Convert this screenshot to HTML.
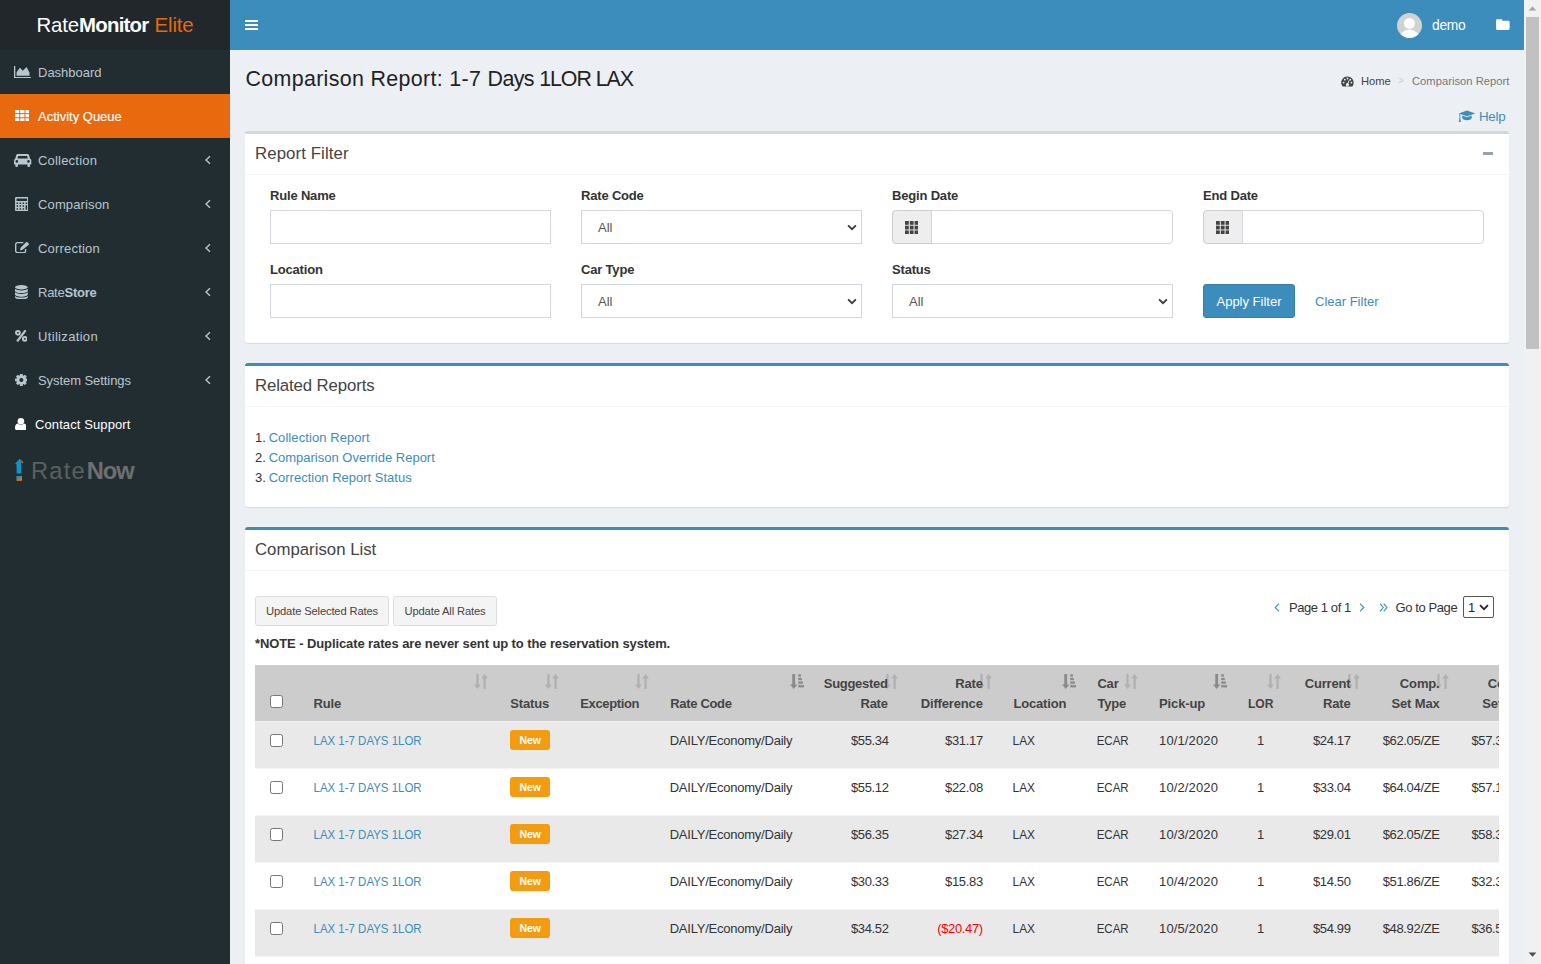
<!DOCTYPE html>
<html lang="en">
<head>
<meta charset="utf-8">
<title>Comparison Report: 1-7 Days 1LOR LAX</title>
<style>
*{box-sizing:border-box}
html,body{margin:0;padding:0}
body{width:1541px;height:964px;overflow:hidden;position:relative;background:#ecf0f5;
 font-family:"Liberation Sans",sans-serif;font-size:13px;line-height:20px;color:#333}
a{color:#3c8dbc;text-decoration:none}
.abs{position:absolute}
svg{display:block}

/* ---------- sidebar ---------- */
#sidebar{position:absolute;left:0;top:0;width:230px;height:964px;background:#222d32}
#logo{position:absolute;left:0;top:0;width:230px;height:50px;background:#22272b;color:#fff;
 font-size:20.4px;line-height:50px;white-space:nowrap}
#logo span.t{position:absolute;left:36.500px;top:0;letter-spacing:-0.15px}
#logo b{font-weight:700;letter-spacing:-0.75px}
#logo i{font-style:normal;color:#e8690e;margin-left:0.6px}
.menu{position:absolute;left:0;top:50px;width:230px;margin:0;padding:0;list-style:none}
.menu li{position:relative;height:44px;color:#b8c7ce;white-space:nowrap}
.menu li .ic{position:absolute}
.menu li .tx{position:absolute;left:38px;top:13px;line-height:20px;font-size:13px}
.menu li .ch{position:absolute;left:204px;top:16px}
.menu li.active{background:#e8690e;color:#fff;-webkit-text-stroke:0.15px #fff}
.menu li.white{color:#fff}

/* ---------- navbar ---------- */
#navbar{position:absolute;left:230px;top:0;width:1294px;height:50px;background:#3c8dbc;color:#fff}

/* ---------- scrollbar ---------- */
#sb{position:absolute;left:1524px;top:0;width:17px;height:964px;background:#f1f1f1}
#sb .thumb{position:absolute;left:2px;top:17px;width:13px;height:332px;background:#c1c1c1}

/* ---------- content ---------- */
h1{position:absolute;left:245.500px;top:63px;margin:0;font-weight:400;font-size:21.4px;line-height:32px;color:#222;white-space:nowrap;letter-spacing:-0.05px}
.box{position:absolute;left:245px;width:1264px;background:#fff;border-top:3px solid #d2d6de;border-radius:3px;
 box-shadow:0 1px 1px rgba(0,0,0,.1)}
.box.primary{border-top-color:#3c8dbc}
.box .hd{height:41px;border-bottom:1px solid #f4f4f4;position:relative}
.box .hd h3{position:absolute;left:10px;top:9px;letter-spacing:0.1px;margin:0;font-weight:400;font-size:16.8px;line-height:22px;color:#444;white-space:nowrap}
label.fl{position:absolute;font-weight:700;font-size:13px;line-height:20px;color:#333;white-space:nowrap;letter-spacing:-0.18px}
.inp{position:absolute;height:34px;border:1px solid #d2d6de;background:#fff}
.sel{position:absolute;height:34px;border:1px solid #d2d6de;background:#fff;color:#555;font-size:13px;line-height:32px;padding-left:16px;padding-top:1px}
.sel svg{position:absolute;right:4px;top:13px}
.addon{position:absolute;width:40px;height:34px;border:1px solid #ccc;background:#eee;border-radius:4px 0 0 4px}

.btnp{position:absolute;width:92px;height:34px;background:#3c8dbc;border:1px solid #367fa9;border-radius:3px;color:#fff;
 text-align:center;line-height:34px;font-size:13px;white-space:nowrap}
ol.rel{position:absolute;left:10px;top:62px;margin:0;padding:0;list-style:none;line-height:20px;white-space:nowrap}
ol.rel li{height:20px}
ol.rel span{display:inline-block;width:10px}

#ratenow .rn{position:absolute;left:31px;top:453px;font-size:23.700px;line-height:36px;color:#5c5f60;white-space:nowrap;letter-spacing:1.200px}
#ratenow .rn b{color:#6e6f6f;letter-spacing:-1.100px;margin-left:1px}

.btnd{position:absolute;height:30px;background:#f4f4f4;border:1px solid #ddd;border-radius:3px;color:#444;text-align:center;
 line-height:28px;font-size:11.200px;white-space:nowrap;letter-spacing:-0.150px}
.note{position:absolute;left:10px;top:104px;font-weight:700;font-size:13px;line-height:20px;color:#333;white-space:nowrap;letter-spacing:-0.100px}
#tw{position:absolute;left:10px;top:135px;width:1244px;height:340px;overflow:hidden}
#tbl{border-collapse:collapse;table-layout:fixed;width:1290px;font-size:13px;line-height:20px;color:#333}
#tbl th,#tbl td{padding:0 8px;white-space:nowrap;text-align:left;vertical-align:top;overflow:visible}
#tbl th{position:relative;height:56px;background:#ccc;font-weight:700;color:#444;vertical-align:bottom;padding-bottom:7px;letter-spacing:-0.150px;}
#tbl th .l{position:relative;display:inline-block}
#tbl td{height:47px;padding-top:10px;letter-spacing:-0.350px}
.sx{display:inline-block;transform-origin:0 50%;letter-spacing:0}
#tbl tr.odd td{background:#e9e9e9;box-shadow:inset 0 1px 0 #f4f4f4}
#tbl tr.even td{background:#fff;box-shadow:inset 0 1px 0 #f4f4f4}
#tbl .r{text-align:right;padding-right:15.400px}
#tbl .r2{text-align:right;padding-right:22.600px}
#tbl .r3{text-align:right;padding-right:15.400px}
#tbl .r4{text-align:right;padding-right:17.500px}
#tbl .c{text-align:center;padding:0}
#tbl td.c{padding-top:10px}
#tbl th.c{padding-bottom:7px}
#tbl .neg{color:#f00}
#tbl .so{position:absolute;top:9px}
#tbl .cb{padding:0;position:relative}
.chk{position:absolute;left:15px;width:13px;height:13px;border:1px solid #767676;border-radius:2.500px;background:#fff}
#tbl th .chk{top:30px}
#tbl td .chk{top:13px}
.lbl{display:inline-block;position:relative;top:-1px;margin-top:0;width:40px;height:20px;background:#f39c12;border-radius:3px;color:#fff;font-weight:700;font-size:10.500px;line-height:21px;text-align:center;vertical-align:top;letter-spacing:0}
</style>
</head>
<body>

<!-- ================= SIDEBAR ================= -->
<div id="sidebar">
  <div id="logo"><span class="t">Rate<b>Monitor</b> <i>Elite</i></span></div>
  <ul class="menu">
    <li><svg class="ic" style="left:14.400px;top:15.800px" width="16.900" height="12.400" viewBox="0.4 0.8 16.9 12.6" preserveAspectRatio="none" fill="#b8c7ce"><path d="M0.4 0.8h1.3v11.3h15.6v1.3H0.4z"/><path d="M3 10.8V7.2L6.3 2.6l3 3 3.6-3.8 3 5.6v3.4z"/></svg><span class="tx">Dashboard</span></li>
    <li class="active"><svg class="ic" style="left:14.800px;top:15.600px" width="14.700" height="11.400" viewBox="0.4 0.6 14.6 11" preserveAspectRatio="none" fill="#fff"><rect x="0.4" y="0.6" width="4.2" height="3"/><rect x="5.6" y="0.6" width="4.2" height="3"/><rect x="10.8" y="0.6" width="4.2" height="3"/><rect x="0.4" y="4.6" width="4.2" height="3"/><rect x="5.6" y="4.6" width="4.2" height="3"/><rect x="10.8" y="4.6" width="4.2" height="3"/><rect x="0.4" y="8.6" width="4.2" height="3"/><rect x="5.6" y="8.6" width="4.2" height="3"/><rect x="10.8" y="8.6" width="4.2" height="3"/></svg><span class="tx">Activity Queue</span></li>
    <li><svg class="ic" style="left:14.400px;top:15.600px" width="17.300" height="13.300" viewBox="0.4 0.4 17.2 12.3" preserveAspectRatio="none" fill="#b8c7ce"><path d="M4.2 0.4h9.6c.8 0 1.3.4 1.6 1.2l1 3.2c.8.3 1.2.9 1.2 1.8v3.6h-1.4v1.2c0 .8-.5 1.3-1.2 1.3s-1.2-.5-1.2-1.3v-1.2H4.2v1.2c0 .8-.5 1.3-1.2 1.3s-1.2-.5-1.2-1.3v-1.2H.4V6.6c0-.9.4-1.5 1.2-1.8l1-3.2C2.900.8 3.400.4 4.200.4zM4.600 2.200 3.800 4.600h10.400l-.8-2.400zM3.200 6a1.300 1.300 0 1 0 0 2.600 1.300 1.300 0 0 0 0-2.600zm11.600 0a1.300 1.300 0 1 0 0 2.600 1.300 1.300 0 0 0 0-2.600z" fill-rule="evenodd"/></svg><span class="tx" style="letter-spacing:0.2px">Collection</span><svg class="ch" width="8" height="12" viewBox="0 0 8 12"><path d="M6 2.200 L2 6 L6 9.800" fill="none" stroke="#b8c7ce" stroke-width="1.400"/></svg></li>
    <li><svg class="ic" style="left:14.700px;top:14.900px" width="13.600" height="14.100" viewBox="0 0 13.4 14"><path fill="#b8c7ce" fill-rule="evenodd" d="M1 0h11.400a1 1 0 0 1 1 1v12a1 1 0 0 1-1 1H1a1 1 0 0 1-1-1V1a1 1 0 0 1 1-1zM1.500 1.500v2.400h10.400V1.500zM1.5 5.4h1.500v1.5h-1.500zM4.5 5.4h1.500v1.5h-1.500zM7.5 5.4h1.500v1.5h-1.500zM10.5 5.4h1.500v1.5h-1.500zM1.5 8.3h1.500v1.5h-1.500zM4.5 8.3h1.500v1.5h-1.500zM7.5 8.3h1.500v1.5h-1.500zM10.5 8.3h1.500v4.4h-1.500zM1.5 11.2h1.500v1.5h-1.500zM4.5 11.2h1.500v1.5h-1.500zM7.5 11.2h1.500v1.5h-1.500z"/></svg><span class="tx" style="letter-spacing:0.13px">Comparison</span><svg class="ch" width="8" height="12" viewBox="0 0 8 12"><path d="M6 2.200 L2 6 L6 9.800" fill="none" stroke="#b8c7ce" stroke-width="1.400"/></svg></li>
    <li><svg class="ic" style="left:14.900px;top:15.700px" width="14.300" height="11.400" viewBox="0 0 14.3 11.4"><path d="M8.300.700H2.400A1.700 1.700 0 0 0 .7 2.400v6.500a1.700 1.700 0 0 0 1.700 1.700h6.500a1.700 1.700 0 0 0 1.700-1.700V7" fill="none" stroke="#b8c7ce" stroke-width="1.350"/><path d="M4.900 8.500 5.600 5.800 11.300.1a.6.6 0 0 1 .85 0l1.700 1.700a.6.6 0 0 1 0 .85L7.600 7.800z" fill="#b8c7ce"/></svg><span class="tx" style="letter-spacing:0.2px">Correction</span><svg class="ch" width="8" height="12" viewBox="0 0 8 12"><path d="M6 2.200 L2 6 L6 9.800" fill="none" stroke="#b8c7ce" stroke-width="1.400"/></svg></li>
    <li><svg class="ic" style="left:14.800px;top:14.700px" width="12.800" height="14.500" viewBox="0.4 0.5 12.8 15.2" preserveAspectRatio="none" fill="#b8c7ce"><ellipse cx="6.800" cy="2.800" rx="6.400" ry="2.300"/><path d="M.4 4.500c1.200 1.200 3.600 1.700 6.400 1.700s5.200-.5 6.400-1.700v2.200c0 1.300-2.900 2.300-6.400 2.300S.4 8 .4 6.700z"/><path d="M.4 8.200c1.200 1.200 3.600 1.700 6.400 1.700s5.200-.5 6.400-1.700v2.200c0 1.300-2.900 2.300-6.400 2.300s-6.400-1-6.400-2.300z"/><path d="M.4 11.900c1.200 1.200 3.600 1.700 6.400 1.700s5.200-.5 6.400-1.700v1.500c0 1.300-2.900 2.300-6.400 2.300s-6.400-1-6.400-2.300z"/></svg><span class="tx" style="letter-spacing:-0.25px">Rate<b>Store</b></span><svg class="ch" width="8" height="12" viewBox="0 0 8 12"><path d="M6 2.200 L2 6 L6 9.800" fill="none" stroke="#b8c7ce" stroke-width="1.400"/></svg></li>
    <li><svg class="ic" style="left:14.700px;top:16.300px" width="12.700" height="11.700" viewBox="0.75 2.35 12.5 11.7" preserveAspectRatio="none"><g fill="none" stroke="#b8c7ce"><circle cx="3.600" cy="5.200" r="1.900" stroke-width="1.900"/><circle cx="10.400" cy="11.200" r="1.900" stroke-width="1.900"/><path d="M11.200 2.600 2.800 13.800" stroke-width="2.100"/></g></svg><span class="tx" style="letter-spacing:0.33px">Utilization</span><svg class="ch" width="8" height="12" viewBox="0 0 8 12"><path d="M6 2.200 L2 6 L6 9.800" fill="none" stroke="#b8c7ce" stroke-width="1.400"/></svg></li>
    <li><svg class="ic" style="left:14.700px;top:16.400px" width="12.700" height="11.900" viewBox="0.95 0.25 12.2 12.2" preserveAspectRatio="none"><g transform="translate(7.050,6.350)"><g fill="#b8c7ce"><rect x="-1.400" y="-6.100" width="2.800" height="12.200" rx=".5"/><rect x="-1.400" y="-6.100" width="2.800" height="12.200" rx=".5" transform="rotate(45)"/><rect x="-1.400" y="-6.100" width="2.800" height="12.200" rx=".5" transform="rotate(90)"/><rect x="-1.400" y="-6.100" width="2.800" height="12.200" rx=".5" transform="rotate(135)"/><circle r="4.700"/></g><circle r="2" fill="#222d32"/></g></svg><span class="tx" style="letter-spacing:-0.07px">System Settings</span><svg class="ch" width="8" height="12" viewBox="0 0 8 12"><path d="M6 2.200 L2 6 L6 9.800" fill="none" stroke="#b8c7ce" stroke-width="1.400"/></svg></li>
    <li class="white"><svg class="ic" style="left:14.700px;top:15.700px" width="11.800" height="12.500" viewBox="0.7 0.6 11.8 12.6" preserveAspectRatio="none" fill="#fff"><circle cx="6.600" cy="3.900" r="3.300"/><path d="M3.400 6.200c.9.800 2 1.200 3.200 1.200s2.300-.4 3.200-1.200c1.900.3 2.700 2 2.700 4.600 0 1.500-.9 2.400-2.200 2.400H2.900c-1.300 0-2.200-.9-2.200-2.400 0-2.600.8-4.300 2.700-4.600z"/></svg><span class="tx" style="left:35px;letter-spacing:0.1px">Contact Support</span></li>
  </ul>
  <div id="ratenow"><svg class="abs" style="left:14px;top:458px" width="11" height="24" viewBox="0 0 11 24"><path d="M1.100 5.800 5.600.8l1.600 2.200v12.400H2.600V6.400z" fill="#1193c9"/><path d="M5.600.8 9.700 4.400 7.900 5.400 7.200 3z" fill="#e8690e"/><path d="M2.600 17.900h5.400v5H2.600z" fill="#e8690e"/><path d="M2.600 17.900h5.400L2.600 22.600z" fill="#1193c9"/></svg><span class="rn">Rate<b>Now</b></span></div>
</div>

<!-- ================= NAVBAR ================= -->
<div id="navbar">
  <span class="abs" style="left:15px;top:20px;width:12.500px;height:2px;background:#fff"></span>
  <span class="abs" style="left:15px;top:24px;width:12.500px;height:2px;background:#fff"></span>
  <span class="abs" style="left:15px;top:28px;width:12.500px;height:2px;background:#fff"></span>
  <svg class="abs" style="left:1167px;top:13px" width="25" height="25" viewBox="0 0 25 25"><defs><clipPath id="av"><circle cx="12.500" cy="12.500" r="12.500"/></clipPath></defs><circle cx="12.500" cy="12.500" r="12.500" fill="#d2d2d2"/><g clip-path="url(#av)" fill="#fff"><circle cx="12.500" cy="10.400" r="5.500"/><ellipse cx="12.500" cy="26" rx="10" ry="9.400"/></g></svg>
  <span class="abs" style="left:1202px;top:16px;line-height:20px;font-size:13.800px;letter-spacing:-0.250px">demo</span>
  <svg class="abs" style="left:1266px;top:19px" width="14" height="11" viewBox="0 0 14 11" fill="#fff"><path d="M1.300.2h3.800c.7 0 1.200.5 1.200 1.200v.4h6.100c.7 0 1.200.5 1.200 1.200v6.700c0 .7-.5 1.200-1.200 1.200H1.300C.6 10.900.1 10.400.1 9.700V1.400C.1.700.6.200 1.300.2z"/></svg>
</div>

<!-- ================= CONTENT ================= -->
<h1><span style="letter-spacing:0.340px">Comparison Report: 1-7 </span><span style="letter-spacing:-0.600px">Days </span><span style="letter-spacing:-1.080px">1LOR LAX</span></h1>
<div id="bc">
  <svg class="abs" style="left:1341px;top:75.600px" width="13" height="11" viewBox="0 0 13 11"><path d="M6.500.4a6.200 6.200 0 0 1 6.200 6.200c0 1.300-.4 2.600-1.100 3.600-.2.300-.4.400-.7.400H2.100c-.3 0-.5-.1-.7-.4A6.200 6.200 0 0 1 6.500.4z" fill="#444"/><g fill="#ecf0f5"><circle cx="2.600" cy="6.600" r=".9"/><circle cx="3.800" cy="3.700" r=".9"/><circle cx="6.500" cy="2.500" r=".9"/><circle cx="9.300" cy="3.700" r=".9"/><circle cx="10.400" cy="6.600" r=".9"/><path d="M7.900 3.900 8.700 4.200 7.300 7.600a1.500 1.500 0 1 1-.9-.3z"/></g></svg>
  <a class="abs" style="left:1361px;top:71px;color:#444;font-size:11.200px;line-height:20px">Home</a>
  <span class="abs" style="left:1398px;top:71px;color:#ccc;font-size:10px;line-height:20px">&gt;</span>
  <span class="abs" style="left:1412px;top:71px;color:#777;font-size:11.200px;line-height:20px;white-space:nowrap;letter-spacing:0.030px">Comparison Report</span>
</div>
<a id="help"><svg class="abs" style="left:1458px;top:109.800px" width="18" height="13" viewBox="0 0 18 13" fill="#3c8dbc"><path d="M9 .5 17.400 3.400 9 6.300.6 3.400z"/><path d="M4.300 5.600 9 7.200l4.700-1.600v2.500c0 1.200-2.100 2.100-4.700 2.100s-4.700-.9-4.700-2.100z"/><path d="M1.400 3.900h.9v4.500l.6 3.600H.8l.6-3.600z"/></svg><span class="abs" style="left:1479px;top:107px;line-height:20px;font-size:13.400px;white-space:nowrap;letter-spacing:-0.300px">Help</span></a>

<div class="box" id="box1" style="top:131px;height:212px">
  <div class="hd"><h3>Report Filter</h3>
    <span class="abs" style="left:1238px;top:18px;width:10px;height:2.600px;background:#97a0b3"></span>
  </div>
  <label class="fl" style="left:25px;top:52px">Rule Name</label>
  <div class="inp" style="left:25px;top:76px;width:281px"></div>
  <label class="fl" style="left:336px;top:52px">Rate Code</label>
  <div class="sel" style="left:336px;top:76px;width:281px">All<svg width="10" height="7" viewBox="0 0 10 7"><path d="M1.100 1.300 5 5.200 8.900 1.300" fill="none" stroke="#3a3a3a" stroke-width="1.800"/></svg></div>
  <label class="fl" style="left:647px;top:52px">Begin Date</label>
  <div class="addon" style="left:647px;top:76px"><svg class="abs" style="left:12px;top:10px" width="13.400" height="13.200" viewBox="0 0 13.4 13.2" fill="#444"><rect x="0" y="0" width="3.800" height="3.800"/><rect x="4.8" y="0" width="3.800" height="3.800"/><rect x="9.6" y="0" width="3.800" height="3.800"/><rect x="0" y="4.7" width="3.800" height="3.800"/><rect x="4.8" y="4.7" width="3.800" height="3.800"/><rect x="9.6" y="4.7" width="3.800" height="3.800"/><rect x="0" y="9.4" width="3.800" height="3.800"/><rect x="4.8" y="9.4" width="3.800" height="3.800"/><rect x="9.6" y="9.4" width="3.800" height="3.800"/></svg></div>
  <div class="inp" style="left:686px;top:76px;width:242px;border-radius:0 4px 4px 0"></div>
  <label class="fl" style="left:958px;top:52px">End Date</label>
  <div class="addon" style="left:958px;top:76px"><svg class="abs" style="left:12px;top:10px" width="13.400" height="13.200" viewBox="0 0 13.4 13.2" fill="#444"><rect x="0" y="0" width="3.800" height="3.800"/><rect x="4.8" y="0" width="3.800" height="3.800"/><rect x="9.6" y="0" width="3.800" height="3.800"/><rect x="0" y="4.7" width="3.800" height="3.800"/><rect x="4.8" y="4.7" width="3.800" height="3.800"/><rect x="9.6" y="4.7" width="3.800" height="3.800"/><rect x="0" y="9.4" width="3.800" height="3.800"/><rect x="4.8" y="9.4" width="3.800" height="3.800"/><rect x="9.6" y="9.4" width="3.800" height="3.800"/></svg></div>
  <div class="inp" style="left:997px;top:76px;width:242px;border-radius:0 4px 4px 0"></div>

  <label class="fl" style="left:25px;top:126px">Location</label>
  <div class="inp" style="left:25px;top:150px;width:281px"></div>
  <label class="fl" style="left:336px;top:126px">Car Type</label>
  <div class="sel" style="left:336px;top:150px;width:281px">All<svg width="10" height="7" viewBox="0 0 10 7"><path d="M1.100 1.300 5 5.200 8.900 1.300" fill="none" stroke="#3a3a3a" stroke-width="1.800"/></svg></div>
  <label class="fl" style="left:647px;top:126px">Status</label>
  <div class="sel" style="left:647px;top:150px;width:281px">All<svg width="10" height="7" viewBox="0 0 10 7"><path d="M1.100 1.300 5 5.200 8.900 1.300" fill="none" stroke="#3a3a3a" stroke-width="1.800"/></svg></div>
  <a class="btnp" style="left:958px;top:150px">Apply Filter</a>
  <a class="abs" style="left:1070px;top:158px;line-height:20px;white-space:nowrap">Clear Filter</a>
</div>

<div class="box primary" id="box2" style="top:363px;height:144px">
  <div class="hd"><h3 style="letter-spacing:-0.120px">Related Reports</h3></div>
  <ol class="rel">
    <li><span>1.</span> <a style="letter-spacing:0.080px">Collection Report</a></li>
    <li><span>2.</span> <a>Comparison Override Report</a></li>
    <li><span>3.</span> <a>Correction Report Status</a></li>
  </ol>
</div>

<div class="box primary" id="box3" style="top:527px;height:460px">
  <div class="hd"><h3 style="letter-spacing:0">Comparison List</h3></div>
  <a class="btnd" style="left:10px;top:66px;width:134px">Update Selected Rates</a>
  <a class="btnd" style="left:148px;top:66px;width:104px">Update All Rates</a>
  <div id="pager">
    <svg class="abs" style="left:1029px;top:73.400px" width="6" height="9" viewBox="0 0 6 9"><path d="M5 .6 1.200 4.500 5 8.400" fill="none" stroke="#3c8dbc" stroke-width="1.100"/></svg>
    <span class="abs" style="left:1044px;top:68px;line-height:20px;white-space:nowrap;letter-spacing:-0.420px">Page 1 of 1</span>
    <svg class="abs" style="left:1114.300px;top:73.400px" width="6" height="9" viewBox="0 0 6 9"><path d="M1 .6 4.800 4.500 1 8.400" fill="none" stroke="#3c8dbc" stroke-width="1.100"/></svg>
    <svg class="abs" style="left:1134px;top:73.400px" width="9" height="9" viewBox="0 0 9 9"><path d="M1 .6 4.300 4.500 1 8.400M4.700.6 8 4.500 4.700 8.400" fill="none" stroke="#3c8dbc" stroke-width="1.100"/></svg>
    <span class="abs" style="left:1150.500px;top:68px;line-height:20px;white-space:nowrap;letter-spacing:-0.400px">Go to Page</span>
    <span class="abs" style="left:1218px;top:66px;width:31px;height:22px;border:1px solid #555;border-radius:2px;background:#fff;line-height:20px;padding-left:4px;padding-top:1px;color:#222">1<svg class="abs" style="left:15px;top:7px" width="10" height="7" viewBox="0 0 10 7"><path d="M1 1.200 5 5.200 9 1.200" fill="none" stroke="#222" stroke-width="1.700"/></svg></span>
  </div>
  <div class="note">*NOTE - Duplicate rates are never sent up to the reservation system.</div>
  <div id="tw"><table id="tbl"><colgroup><col style="width:50.6px"><col style="width:196.6px"><col style="width:70.0px"><col style="width:90.0px"><col style="width:154.8px"><col style="width:87px"><col style="width:101.4px"><col style="width:84.0px"><col style="width:61.7px"><col style="width:88.9px"><col style="width:41px"><col style="width:85px"><col style="width:89px"><col style="width:90px"></colgroup>
<thead><tr><th class="cb"><span class="chk"></span></th>
<th class=""><svg class="so" style="right:13.8px" width="14" height="15" viewBox="0 0 14 15" fill="#b0b0b0"><path d="M2.300 0h2.300v10.600h2.300L3.450 15 0 10.600h2.300z"/><path d="M9.400 15h2.300V4.400H14L10.550 0 7.100 4.400h2.300z"/></svg><span class="l">Rule</span></th>
<th class=""><svg class="so" style="right:13.2px" width="14" height="15" viewBox="0 0 14 15" fill="#b0b0b0"><path d="M2.300 0h2.300v10.600h2.300L3.450 15 0 10.600h2.300z"/><path d="M9.400 15h2.300V4.400H14L10.550 0 7.100 4.400h2.300z"/></svg><span class="l">Status</span></th>
<th class=""><svg class="so" style="right:13.2px" width="14" height="15" viewBox="0 0 14 15" fill="#b0b0b0"><path d="M2.300 0h2.300v10.600h2.300L3.450 15 0 10.600h2.300z"/><path d="M9.400 15h2.300V4.400H14L10.550 0 7.100 4.400h2.300z"/></svg><span class="l" style="letter-spacing:-0.350px">Exception</span></th>
<th class=""><svg class="so" style="right:12.9px" width="14" height="15" viewBox="0 0 14 15" fill="#8a8a8a"><path d="M2.300 0h2.800v10.600h2.300L3.700 15 0 10.600h2.300z"/><rect x="8.200" y="0.300" width="2.700" height="2.300"/><rect x="8.200" y="3.900" width="3.600" height="2.300"/><rect x="8.200" y="7.500" width="4.700" height="2.300"/><rect x="8.200" y="11.100" width="5.800" height="2.300"/></svg><span class="l" style="letter-spacing:-0.320px">Rate Code</span></th>
<th class="r"><svg class="so" style="right:5.6px" width="14" height="15" viewBox="0 0 14 15" fill="#b0b0b0"><path d="M2.300 0h2.300v10.600h2.300L3.450 15 0 10.600h2.300z"/><path d="M9.400 15h2.300V4.400H14L10.550 0 7.100 4.400h2.300z"/></svg><span class="l" style="letter-spacing:-0.300px;left:-1.200px">Suggested<br>Rate</span></th>
<th class="r2"><svg class="so" style="right:13.6px" width="14" height="15" viewBox="0 0 14 15" fill="#b0b0b0"><path d="M2.300 0h2.300v10.600h2.300L3.450 15 0 10.600h2.300z"/><path d="M9.400 15h2.300V4.400H14L10.550 0 7.100 4.400h2.300z"/></svg><span class="l">Rate<br>Difference</span></th>
<th class=""><svg class="so" style="right:13.1px" width="14" height="15" viewBox="0 0 14 15" fill="#8a8a8a"><path d="M2.300 0h2.800v10.600h2.300L3.700 15 0 10.600h2.300z"/><rect x="8.200" y="0.300" width="2.700" height="2.300"/><rect x="8.200" y="3.900" width="3.600" height="2.300"/><rect x="8.200" y="7.500" width="4.700" height="2.300"/><rect x="8.200" y="11.100" width="5.800" height="2.300"/></svg><span class="l">Location</span></th>
<th class=""><svg class="so" style="right:13.3px" width="14" height="15" viewBox="0 0 14 15" fill="#b0b0b0"><path d="M2.300 0h2.300v10.600h2.300L3.450 15 0 10.600h2.300z"/><path d="M9.400 15h2.300V4.400H14L10.550 0 7.100 4.400h2.300z"/></svg><span class="l">Car<br>Type</span></th>
<th class=""><svg class="so" style="right:13px" width="14" height="15" viewBox="0 0 14 15" fill="#8a8a8a"><path d="M2.300 0h2.800v10.600h2.300L3.700 15 0 10.600h2.300z"/><rect x="8.200" y="0.300" width="2.700" height="2.300"/><rect x="8.200" y="3.900" width="3.600" height="2.300"/><rect x="8.200" y="7.500" width="4.700" height="2.300"/><rect x="8.200" y="11.100" width="5.800" height="2.300"/></svg><span class="l">Pick-up</span></th>
<th class="c"><svg class="so" style="right:-0.5px" width="14" height="15" viewBox="0 0 14 15" fill="#b0b0b0"><path d="M2.300 0h2.300v10.600h2.300L3.450 15 0 10.600h2.300z"/><path d="M9.400 15h2.300V4.400H14L10.550 0 7.100 4.400h2.300z"/></svg><span class="l"><span class="sx" style="transform:scaleX(.93);transform-origin:50% 50%">LOR</span></span></th>
<th class="r3"><svg class="so" style="right:5.8px" width="14" height="15" viewBox="0 0 14 15" fill="#b0b0b0"><path d="M2.300 0h2.300v10.600h2.300L3.450 15 0 10.600h2.300z"/><path d="M9.400 15h2.300V4.400H14L10.550 0 7.100 4.400h2.300z"/></svg><span class="l">Current<br>Rate</span></th>
<th class="r3"><svg class="so" style="right:6px" width="14" height="15" viewBox="0 0 14 15" fill="#b0b0b0"><path d="M2.300 0h2.300v10.600h2.300L3.450 15 0 10.600h2.300z"/><path d="M9.400 15h2.300V4.400H14L10.550 0 7.100 4.400h2.300z"/></svg><span class="l">Comp.<br>Set Max</span></th>
<th class="r4"><svg class="so" style="right:6px" width="14" height="15" viewBox="0 0 14 15" fill="#b0b0b0"><path d="M2.300 0h2.300v10.600h2.300L3.450 15 0 10.600h2.300z"/><path d="M9.400 15h2.300V4.400H14L10.550 0 7.100 4.400h2.300z"/></svg><span class="l">Comp.<br>Set Min</span></th></tr></thead>
<tbody>
<tr class="odd"><td class="cb"><span class="chk"></span></td><td><a class="sx" style="transform:translateX(-.5px) scaleX(.882)">LAX 1-7 DAYS 1LOR</a></td><td><span class="lbl">New</span></td><td></td><td style="letter-spacing:-0.230px;padding-left:7.500px">DAILY/Economy/Daily</td><td class="r">$55.34</td><td class="r2">$31.17</td><td><span class="sx" style="transform:translateX(-.4px) scaleX(.91)">LAX</span></td><td><span class="sx" style="transform:translateX(-.3px) scaleX(.885)">ECAR</span></td><td style="letter-spacing:0.120px">10/1/2020</td><td class="c">1</td><td class="r3">$24.17</td><td class="r3">$62.05/ZE</td><td class="r4">$57.34/AL</td></tr>
<tr class="even"><td class="cb"><span class="chk"></span></td><td><a class="sx" style="transform:translateX(-.5px) scaleX(.882)">LAX 1-7 DAYS 1LOR</a></td><td><span class="lbl">New</span></td><td></td><td style="letter-spacing:-0.230px;padding-left:7.500px">DAILY/Economy/Daily</td><td class="r">$55.12</td><td class="r2">$22.08</td><td><span class="sx" style="transform:translateX(-.4px) scaleX(.91)">LAX</span></td><td><span class="sx" style="transform:translateX(-.3px) scaleX(.885)">ECAR</span></td><td style="letter-spacing:0.120px">10/2/2020</td><td class="c">1</td><td class="r3">$33.04</td><td class="r3">$64.04/ZE</td><td class="r4">$57.12/AL</td></tr>
<tr class="odd"><td class="cb"><span class="chk"></span></td><td><a class="sx" style="transform:translateX(-.5px) scaleX(.882)">LAX 1-7 DAYS 1LOR</a></td><td><span class="lbl">New</span></td><td></td><td style="letter-spacing:-0.230px;padding-left:7.500px">DAILY/Economy/Daily</td><td class="r">$56.35</td><td class="r2">$27.34</td><td><span class="sx" style="transform:translateX(-.4px) scaleX(.91)">LAX</span></td><td><span class="sx" style="transform:translateX(-.3px) scaleX(.885)">ECAR</span></td><td style="letter-spacing:0.120px">10/3/2020</td><td class="c">1</td><td class="r3">$29.01</td><td class="r3">$62.05/ZE</td><td class="r4">$58.35/AL</td></tr>
<tr class="even"><td class="cb"><span class="chk"></span></td><td><a class="sx" style="transform:translateX(-.5px) scaleX(.882)">LAX 1-7 DAYS 1LOR</a></td><td><span class="lbl">New</span></td><td></td><td style="letter-spacing:-0.230px;padding-left:7.500px">DAILY/Economy/Daily</td><td class="r">$30.33</td><td class="r2">$15.83</td><td><span class="sx" style="transform:translateX(-.4px) scaleX(.91)">LAX</span></td><td><span class="sx" style="transform:translateX(-.3px) scaleX(.885)">ECAR</span></td><td style="letter-spacing:0.120px">10/4/2020</td><td class="c">1</td><td class="r3">$14.50</td><td class="r3">$51.86/ZE</td><td class="r4">$32.33/AL</td></tr>
<tr class="odd"><td class="cb"><span class="chk"></span></td><td><a class="sx" style="transform:translateX(-.5px) scaleX(.882)">LAX 1-7 DAYS 1LOR</a></td><td><span class="lbl">New</span></td><td></td><td style="letter-spacing:-0.230px;padding-left:7.500px">DAILY/Economy/Daily</td><td class="r">$34.52</td><td class="r2 neg">($20.47)</td><td><span class="sx" style="transform:translateX(-.4px) scaleX(.91)">LAX</span></td><td><span class="sx" style="transform:translateX(-.3px) scaleX(.885)">ECAR</span></td><td style="letter-spacing:0.120px">10/5/2020</td><td class="c">1</td><td class="r3">$54.99</td><td class="r3">$48.92/ZE</td><td class="r4">$36.52/AL</td></tr>
<tr class="even"><td class="cb"><span class="chk"></span></td><td><a class="sx" style="transform:translateX(-.5px) scaleX(.882)">LAX 1-7 DAYS 1LOR</a></td><td><span class="lbl">New</span></td><td></td><td style="letter-spacing:-0.230px;padding-left:7.500px">DAILY/Economy/Daily</td><td class="r">$33.10</td><td class="r2">$12.60</td><td><span class="sx" style="transform:translateX(-.4px) scaleX(.91)">LAX</span></td><td><span class="sx" style="transform:translateX(-.3px) scaleX(.885)">ECAR</span></td><td style="letter-spacing:0.120px">10/6/2020</td><td class="c">1</td><td class="r3">$20.50</td><td class="r3">$49.90/ZE</td><td class="r4">$35.10/AL</td></tr>
</tbody></table></div>
</div>

<!-- ================= SCROLLBAR ================= -->
<div id="sb"><svg class="abs" style="left:4px;top:6px" width="9" height="5" viewBox="0 0 9 5"><path d="M4.500.4 8.400 4.600H.6z" fill="#a3a3a3"/></svg><div class="thumb"></div><svg class="abs" style="left:4px;top:952px" width="9" height="5" viewBox="0 0 9 5"><path d="M.6.500h7.800L4.500 4.700z" fill="#505050"/></svg></div>

</body>
</html>
